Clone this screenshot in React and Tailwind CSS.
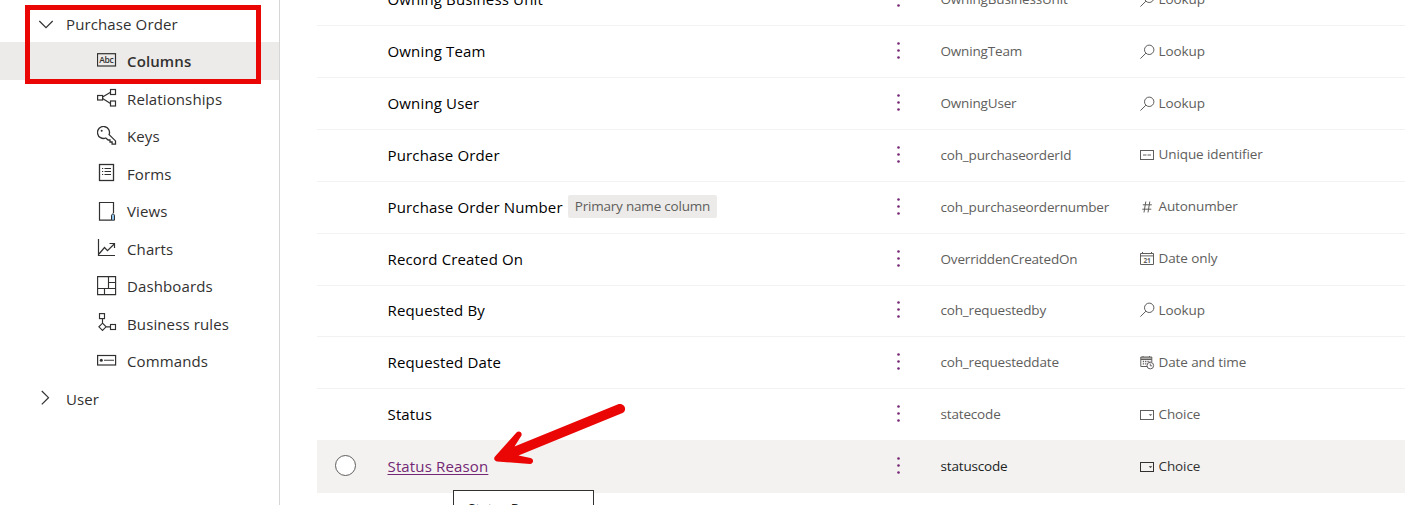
import React from "react";

const iconClass = "h-5 w-5 shrink-0";

function AbcIcon() {
  return (
    <svg className={iconClass} viewBox="0 0 20 20" fill="none" stroke="#323130">
      <rect x="0.500" y="2.700" width="18" height="12.300" strokeWidth="1.200" />
      <text x="9.500" y="12.100" textAnchor="middle" fontSize="8.500" fontFamily="Open Sans, sans-serif" fontWeight="600" fill="#323130" stroke="none" textLength="14.500">Abc</text>
    </svg>
  );
}
function RelationIcon() {
  return (
    <svg className={iconClass} viewBox="0 0 20 20" fill="none" stroke="#323130" strokeWidth="1.200">
      <rect x="0.600" y="7.500" width="5" height="4.500" />
      <rect x="13.500" y="1.500" width="5" height="5" />
      <rect x="13.500" y="13" width="5" height="5" />
      <path d="M5.600 9 13.500 4.200M5.600 10.500 13.500 15.500" />
    </svg>
  );
}
function KeyIcon() {
  return (
    <svg className={iconClass} viewBox="0 0 20 20" fill="none" stroke="#323130" strokeWidth="1.300">
      <path d="M12.100 8.600A6 6 0 1 0 8.800 12l2.300 2h1.900v2h2.100v2.100h3.400v-3.200z" />
      <circle cx="4.700" cy="4.800" r="1" fill="#323130" stroke="none" />
    </svg>
  );
}
function FormIcon() {
  return (
    <svg className={iconClass} viewBox="0 0 20 20" fill="none" stroke="#323130">
      <rect x="2.500" y="1.500" width="14" height="16" strokeWidth="1.300" />
      <path d="M5 5.500h1.200M7.500 5.500H14M5 8.500h1.200M7.500 8.500H14M5 11.500h1.200M7.500 11.500H14" />
    </svg>
  );
}
function ViewIcon() {
  return (
    <svg className={iconClass} viewBox="0 0 20 20" fill="none" stroke="#323130">
      <path d="M16.500 12V1.500h-14v17.700h12" strokeWidth="1.200" />
      <path d="M14.500 19.200v-5l1.500-1.700 1.500 1.700v5z" fill="#8ec3ec" />
    </svg>
  );
}
function ChartIcon() {
  return (
    <svg className={iconClass} viewBox="0 0 20 20" fill="none" stroke="#323130">
      <path d="M1.500 1v16.500H18M2 16l5.500-6.500 3 3.200L17.200 6M12.500 5.500h5V10" strokeWidth="1.200" />
    </svg>
  );
}
function DashboardIcon() {
  return (
    <svg className={iconClass} viewBox="0 0 20 20" fill="none" stroke="#323130" strokeWidth="1.150">
      <path d="M0.600 0.600h18v18h-18zM0.500 12.500h18M11.500 0.500v12M11.500 6.500h7M7.500 12.500v6" />
    </svg>
  );
}
function RulesIcon() {
  return (
    <svg className={iconClass} viewBox="0 0 20 20" fill="none" stroke="#323130" strokeWidth="1.150">
      <rect x="2.500" y="0.600" width="5" height="5" />
      <rect x="13.500" y="11.500" width="5" height="5" />
      <path d="M5.500 5.500v5M9 13.800h4.500M5.500 10.200l3.600 3.600-3.600 3.600-3.600-3.600z" />
    </svg>
  );
}
function CommandIcon() {
  return (
    <svg className={iconClass} viewBox="0 0 20 20" fill="none" stroke="#323130" strokeWidth="1.200">
      <rect x="0.600" y="4.500" width="18" height="9.500" />
      <path d="M7 9.300h10" strokeOpacity="0.800" />
      <circle cx="4.300" cy="9.300" r="1.500" fill="#323130" stroke="none" />
    </svg>
  );
}

const typeIcon = "h-4 w-4 shrink-0";
const typeIcons = {
  Lookup: (
    <svg className={typeIcon} viewBox="0 0 16 16" fill="none" stroke="currentColor">
      <circle cx="9.200" cy="5.800" r="4.700" />
      <path d="M5.900 9.200.400 14.600" />
    </svg>
  ),
  "Unique identifier": (
    <svg className={typeIcon} viewBox="0 0 16 16" fill="none" stroke="currentColor">
      <rect x="0.500" y="3.500" width="13" height="9" />
      <path d="M3 8h3.500M7.500 8H11" />
    </svg>
  ),
  Autonumber: (
    <svg className={typeIcon} viewBox="0 0 16 16" fill="none" stroke="currentColor">
      <path d="M5.800 2.500 4 13.500M9.800 2.500 8 13.500M2.800 5.800h9M2.300 10.200h9" />
    </svg>
  ),
  "Date only": (
    <svg className={typeIcon} viewBox="0 0 16 16" fill="none" stroke="currentColor">
      <path d="M0.500 2.500h13v11H0.500zM0.500 4.900h13M2.500 1v1.500M11.500 1v1.500" />
      <text x="7.100" y="11.500" textAnchor="middle" fontSize="6.500" fontWeight="700" fontFamily="Open Sans, sans-serif" fill="currentColor" stroke="none">21</text>
    </svg>
  ),
  "Date and time": (
    <svg className={typeIcon} viewBox="0 0 16 16" fill="none" stroke="currentColor">
      <path d="M7 11.500H0.800V2h11v5M0.800 3h11M0.800 4.500h11M3 1v1M9.500 1v1" />
      <path d="M2.800 6.500h7.500M2.800 8.800h4" strokeDasharray="1.300 1" strokeWidth="1.300" />
      <circle cx="10.300" cy="10.600" r="3.300" />
      <path d="M10.300 8.600v2.200h1.800" strokeWidth="0.900" />
    </svg>
  ),
  Choice: (
    <svg className={typeIcon} viewBox="0 0 16 16" fill="none" stroke="currentColor">
      <rect x="0.500" y="3.500" width="13" height="9" />
      <path d="M8.700 7.200h3.600l-1.800 1.900z" fill="currentColor" stroke="none" />
    </svg>
  ),
};

const navItems = [
  ["Columns", AbcIcon],
  ["Relationships", RelationIcon],
  ["Keys", KeyIcon],
  ["Forms", FormIcon],
  ["Views", ViewIcon],
  ["Charts", ChartIcon],
  ["Dashboards", DashboardIcon],
  ["Business rules", RulesIcon],
  ["Commands", CommandIcon],
];

const rows = [
  { name: "Owning Business Unit", logical: "OwningBusinessUnit", type: "Lookup" },
  { name: "Owning Team", logical: "OwningTeam", type: "Lookup" },
  { name: "Owning User", logical: "OwningUser", type: "Lookup" },
  { name: "Purchase Order", logical: "coh_purchaseorderId", type: "Unique identifier", raised: true },
  { name: "Purchase Order Number", logical: "coh_purchaseordernumber", type: "Autonumber", badge: "Primary name column", raised: true },
  { name: "Record Created On", logical: "OverriddenCreatedOn", type: "Date only", raised: true },
  { name: "Requested By", logical: "coh_requestedby", type: "Lookup", short: true },
  { name: "Requested Date", logical: "coh_requesteddate", type: "Date and time" },
  { name: "Status", logical: "statecode", type: "Choice" },
  { name: "Status Reason", logical: "statuscode", type: "Choice", active: true },
];

function Sidebar() {
  return (
    <nav className="h-full w-[280px] shrink-0 border-r border-[#d6d6d6] pt-[5px] text-[15px] tracking-[0.12px] text-[#323130]">
      <div className="flex h-[37px] items-center pl-[38px]">
        <svg className="mr-[12px] h-4 w-4" viewBox="0 0 16 16" fill="none" stroke="#323130" strokeWidth="1.200">
          <path d="M1.300 5 8 11.700 14.700 5" />
        </svg>
        <span className="pt-[2px]">Purchase Order</span>
      </div>
      {navItems.map(([label, Icon], i) => (
        <div key={label} className={"flex h-[37.5px] items-center pl-[96.500px] " + (i === 0 ? "bg-[#edebe9] font-semibold" : "")}>
          <Icon />
          <span className="ml-[10.500px] pt-[1.200px]">{label}</span>
        </div>
      ))}
      <div className="flex h-[37.5px] items-center pl-[38px]">
        <svg className="mr-[12px] h-4 w-4" viewBox="0 0 16 16" fill="none" stroke="#323130" strokeWidth="1.200">
          <path d="M3.800 1 10.500 7.700 3.800 14.400" />
        </svg>
        <span className="pt-[1.200px]">User</span>
      </div>
    </nav>
  );
}

function Row({ row }) {
  return (
    <div className={"flex shrink-0 items-center border-b border-[#f3f2f1] " + (row.short ? "h-[51px] pb-[2px] " : "h-[52px] ") + (row.active ? "bg-[#f3f2f1]" : "")}>
      <div className="flex w-[70.500px] shrink-0 pb-[2px] pl-[18px]">
        {row.active && <span className="h-[21px] w-[21px] rounded-full border border-[#605e5c] bg-white" />}
      </div>
      <div className="flex w-[505.500px] shrink-0 items-center text-[15px] tracking-[0.15px] text-black">
        <span className={row.active ? "text-[#742774] underline underline-offset-2" : ""}>{row.name}</span>
        {row.badge && (
          <span className="-mt-[2px] ml-[5px] h-[23px] rounded-[2px] bg-[#edebe9] px-[7px] text-[13.500px] leading-[22px] tracking-[-0.2px] text-[#605e5c]">{row.badge}</span>
        )}
      </div>
      <div className={"w-[47px] shrink-0 " + (row.short ? "" : "pb-[2px]")}>
        <svg className="h-5 w-3" viewBox="0 0 12 20" fill="#742774">
          <circle cx="5.500" cy="2.500" r="1.300" />
          <circle cx="5.500" cy="9.500" r="1.300" />
          <circle cx="5.500" cy="16.500" r="1.300" />
        </svg>
      </div>
      <div className={"w-[200px] shrink-0 pl-[0.500px] text-[13.500px] tracking-[-0.17px] " + (row.active ? "text-[#201f1e]" : "text-[#605e5c]")}>{row.logical}</div>
      <div className={"flex items-center gap-[2.500px] text-[13.500px] tracking-[-0.1px] " + (row.raised ? "pb-[2px] " : "") + (row.active ? "text-[#323130]" : "text-[#605e5c]")}>
        {typeIcons[row.type]}
        <span>{row.type}</span>
      </div>
    </div>
  );
}

export default function App() {
  return (
    <div className="relative flex h-[505px] w-[1405px] overflow-hidden bg-white font-['Open_Sans',sans-serif]">
      <Sidebar />
      <main className="-mt-[26px] ml-[37px] flex grow flex-col">
        {rows.map((row) => (
          <Row key={row.name} row={row} />
        ))}
      </main>
      <div className="absolute left-[453px] top-[490px] h-[40px] w-[141px] border border-[#323130] bg-white pl-[14px] pt-[7px] text-[13.500px] leading-[20px] text-[#201f1e]">
        Status Reason
      </div>
      <div className="absolute left-[25px] top-[5px] h-[79px] w-[236px] border-[5px] border-[#eb0606]" />
      <svg className="absolute left-[480px] top-[390px] h-[90px] w-[160px]" viewBox="480 390 160 90">
        <path
          d="M617.500 404.500C624 402 628 410 622.500 413L518.500 455.500 530.500 458C534.500 459 533.500 464 530 464L497 461.500C494 461 493.500 458 495 456.500L516.500 432.500C519 430 522.500 432.500 521.500 435.500L514.500 446.500Z"
          fill="#eb0606"
        />
      </svg>
    </div>
  );
}
